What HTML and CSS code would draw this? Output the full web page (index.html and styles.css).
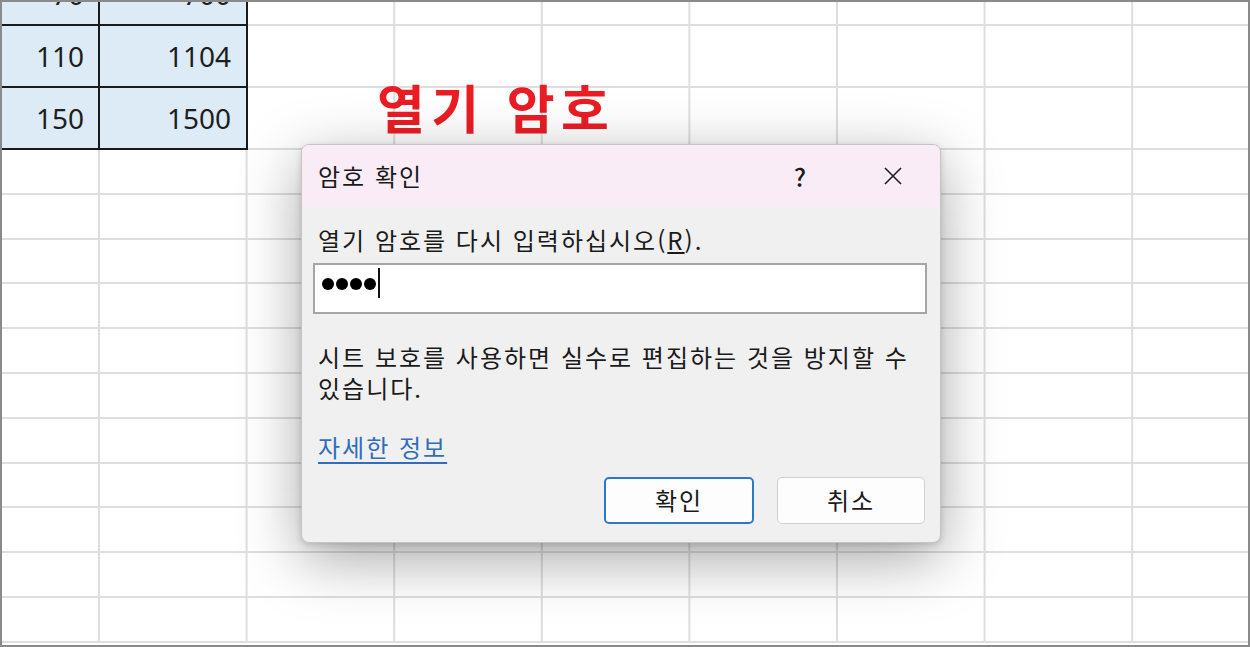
FILE: index.html
```html
<!DOCTYPE html>
<html lang="ko">
<head>
  <meta charset="UTF-8" />
  <meta name="viewport" content="width=device-width, initial-scale=1.0"/>
  <title>암호 확인</title>
  <link rel="stylesheet" href="styles.css">
</head>
<body>

  <div class="sheet">
    <div class="row tall top">
      <div class="cell first">70</div>
      <div class="cell">700</div>
    </div>
    <div class="row tall">
      <div class="cell first">110</div>
      <div class="cell">1104</div>
    </div>
    <div class="row tall">
      <div class="cell first">150</div>
      <div class="cell">1500</div>
    </div>
    <div class="row"></div>
    <div class="row"></div>
    <div class="row"></div>
    <div class="row"></div>
    <div class="row"></div>
    <div class="row"></div>
    <div class="row"></div>
    <div class="row"></div>
    <div class="row"></div>
    <div class="row"></div>
    <div class="row"></div>

    <div class="note">열기 암호</div>

    <div class="dialog">
      <div class="dialog-title">
        <span class="title-text">암호 확인</span>
        <span class="title-btn help">?</span>
        <span class="title-btn close">
          <svg width="20" height="20" viewBox="0 0 20 20">
            <path d="M2 2 L18 18 M18 2 L2 18" stroke="#1f1f1f" stroke-width="1.6" fill="none"/>
          </svg>
        </span>
      </div>

      <div class="dialog-body">
        <label class="prompt">열기 암호를 다시 입력하십시오(<u>R</u>).</label>
        <div class="password">
          <span class="dot"></span>
          <span class="dot"></span>
          <span class="dot"></span>
          <span class="dot"></span>
          <span class="caret"></span>
        </div>
        <p class="hint">시트 보호를 사용하면 실수로 편집하는 것을 방지할 수 있습니다.</p>
        <a class="more" href="#">자세한 정보</a>
        <div class="actions">
          <button class="btn primary">확인</button>
          <button class="btn cancel">취소</button>
        </div>
      </div>
    </div>
  </div>

</body>
</html>
```

FILE: styles.css
```css
body {
  margin: 0;
  font-family: "Noto Sans", "Noto Sans CJK KR", sans-serif;
  background-color: #fff;
}

.sheet {
  position: relative;
  width: 1250px;
  height: 647px;
  box-sizing: border-box;
  border: 2px solid #8a8a8a;
  overflow: hidden;
  background-color: #fff;
}

.row {
  display: flex;
  box-sizing: border-box;
  height: 44.8px;
  border-bottom: 2px solid #dedede;
  background-image: linear-gradient(90deg, transparent 145.6px, #dedede 145.6px);
  background-size: 147.6px 100%;
  background-position: -49.6px 0;
  background-repeat: repeat-x;
}

.row.tall {
  height: 62px;
}

.row.top {
  margin-top: -38px;
}

.cell {
  box-sizing: border-box;
  width: 148px;
  height: 62px;
  margin-bottom: -2px;
  display: flex;
  align-items: center;
  justify-content: flex-end;
  padding-right: 15px;
  background-color: #ddebf7;
  border-right: 2px solid #1a1a1a;
  border-bottom: 2px solid #1a1a1a;
  font-size: 28px;
  color: #1e1e1e;
}

.cell.first {
  width: 98px;
  padding-right: 14px;
}

.note {
  position: absolute;
  left: 375px;
  top: 75px;
  font-family: "Noto Sans CJK KR", sans-serif;
  font-size: 52px;
  line-height: 60px;
  font-weight: bold;
  letter-spacing: 6.5px;
  color: #ea1c24;
}

.dialog {
  position: absolute;
  left: 299px;
  top: 142px;
  width: 640px;
  box-sizing: border-box;
  border: 1px solid #c4c4c4;
  border-radius: 8px;
  overflow: hidden;
  background-color: #f0f0f0;
  box-shadow: 0 16px 60px rgba(0, 0, 0, 0.35), 0 2px 6px rgba(0, 0, 0, 0.15);
  font-family: "Noto Sans CJK KR", sans-serif;
  font-size: 24px;
  letter-spacing: 2px;
  color: #1a1a1a;
}

.dialog-title {
  display: flex;
  align-items: center;
  height: 62px;
  padding-left: 16px;
  padding-right: 24px;
  background-color: #f9ecf6;
}

.title-text {
  flex: 1;
  line-height: 32px;
}

.title-btn {
  width: 46px;
  height: 46px;
  display: flex;
  align-items: center;
  justify-content: center;
  line-height: 1;
  letter-spacing: 0;
}

.title-btn.help {
  margin-right: 47px;
  font-size: 25px;
  font-weight: 500;
}

.dialog-body {
  padding: 17px 13px 18px 11px;
}

.prompt {
  display: block;
  padding-left: 5px;
  line-height: 32px;
}

.password {
  display: flex;
  align-items: flex-start;
  box-sizing: border-box;
  height: 51px;
  margin-top: 7px;
  padding: 3px 0 0 7px;
  background-color: #fff;
  border: 2px solid #a6a6a6;
}

.dot {
  width: 12px;
  height: 12px;
  margin-top: 10px;
  margin-right: 2px;
  border-radius: 50%;
  background-color: #000;
}

.caret {
  width: 2px;
  height: 30px;
  margin-left: 0;
  background-color: #111;
}

.hint {
  margin: 27px 0 0;
  padding-left: 5px;
  line-height: 31px;
  word-break: keep-all;
}

.more {
  display: inline-block;
  margin-top: 28px;
  margin-left: 5px;
  line-height: 31px;
  color: #2f6eba;
  text-decoration: underline;
  text-underline-offset: 5px;
}

.actions {
  display: flex;
  justify-content: flex-end;
  gap: 23px;
  margin-top: 13px;
  padding-right: 2px;
}

.btn {
  box-sizing: border-box;
  width: 148px;
  height: 47px;
  padding-bottom: 3px;
  border-radius: 5px;
  background-color: #fdfdfd;
  border: 1px solid #d0d0d0;
  font-family: "Noto Sans CJK KR", sans-serif;
  font-size: 24px;
  letter-spacing: 2px;
  color: #1a1a1a;
  cursor: pointer;
}

.btn.primary {
  width: 150px;
  border: 2px solid #2b79cb;
}
```
